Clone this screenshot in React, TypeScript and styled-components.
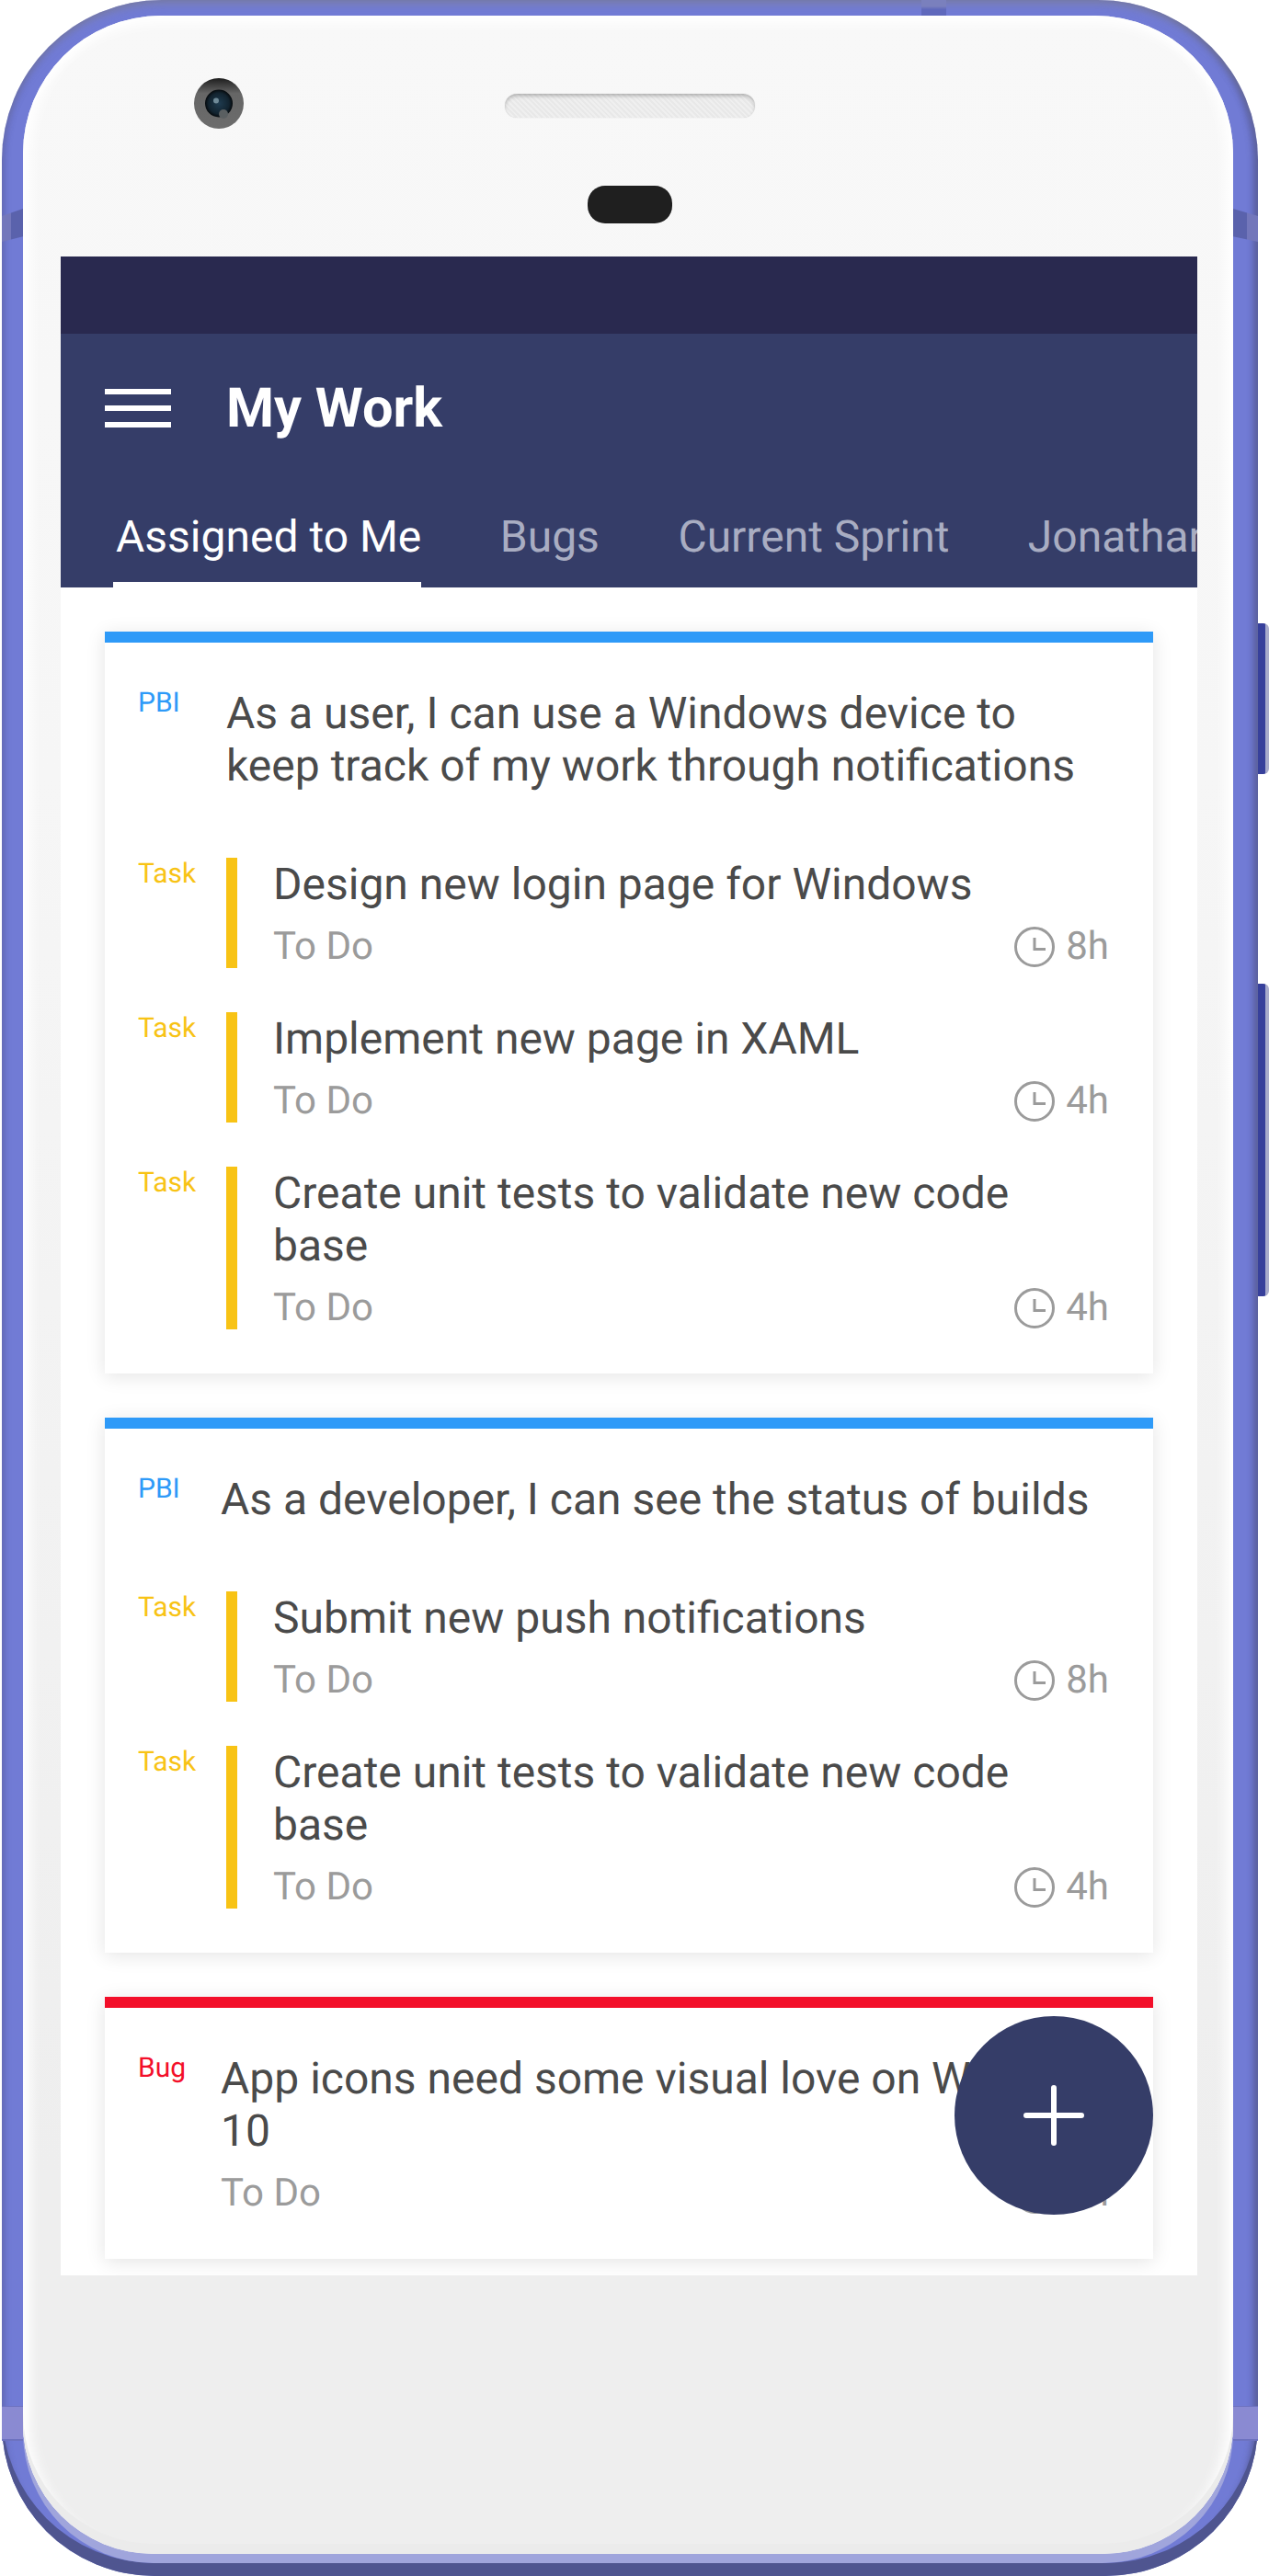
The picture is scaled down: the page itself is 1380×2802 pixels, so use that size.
import styled, { createGlobalStyle } from "styled-components";

const GlobalStyle = createGlobalStyle`
  html, body {
    margin: 0;
    background: #fff;
    overflow: hidden;
  }
  body {
    font-family: Roboto, "Liberation Sans", sans-serif;
    text-rendering: geometricPrecision;
  }
`;

type Task = { title: string; hours: string };
type WorkItem = {
  kind: "PBI" | "Bug";
  title: string;
  labelWidth: number;
  status?: string;
  hours?: string;
  tasks: Task[];
};

const colors = { PBI: "#2e9af8", Bug: "#f30f2a", Task: "#f8c315" };

const items: WorkItem[] = [
  {
    kind: "PBI",
    title:
      "As a user, I can use a Windows device to keep track of my work through notifications",
    labelWidth: 96,
    tasks: [
      { title: "Design new login page for Windows", hours: "8h" },
      { title: "Implement new page in XAML", hours: "4h" },
      { title: "Create unit tests to validate new code base", hours: "4h" },
    ],
  },
  {
    kind: "PBI",
    title: "As a developer, I can see the status of builds",
    labelWidth: 90,
    tasks: [
      { title: "Submit new push notifications", hours: "8h" },
      { title: "Create unit tests to validate new code base", hours: "4h" },
    ],
  },
  {
    kind: "Bug",
    title: "App icons need some visual love on Windows 10",
    labelWidth: 90,
    status: "To Do",
    hours: "4h",
    tasks: [],
  },
];

const tabs = ["Assigned to Me", "Bugs", "Current Sprint", "Jonathan"];

const ClockIcon = () => (
  <svg width="44" height="44" viewBox="0 0 44 44" fill="none">
    <circle cx="22" cy="22" r="20.5" stroke="#9b9b9b" strokeWidth="3" />
    <path d="M22 12v12.5h12" stroke="#9b9b9b" strokeWidth="3" />
  </svg>
);

const CameraLens = () => (
  <svg width="54" height="55" viewBox="0 0 54 55">
    <defs>
      <linearGradient id="ring" x1="0" y1="0" x2="0" y2="1">
        <stop offset="0" stopColor="#1d1d1d" />
        <stop offset="0.3" stopColor="#666" />
        <stop offset="1" stopColor="#6c6c6c" />
      </linearGradient>
      <radialGradient id="pupil">
        <stop offset="0" stopColor="#1f3c50" />
        <stop offset="0.75" stopColor="#12232f" />
        <stop offset="1" stopColor="#05090c" />
      </radialGradient>
    </defs>
    <ellipse cx="27" cy="27.5" rx="27" ry="27.5" fill="url(#ring)" />
    <circle cx="27" cy="27.5" r="15" fill="url(#pupil)" />
    <circle cx="24" cy="24.5" r="3" fill="#6f8a98" />
    <circle cx="32" cy="39" r="5" fill="#5a5f61" />
  </svg>
);

const PlusIcon = () => (
  <svg width="66" height="66" viewBox="0 0 66 66" fill="none">
    <path
      d="M33 3v60M3 33h60"
      stroke="#fff"
      strokeWidth="6"
      strokeLinecap="round"
    />
  </svg>
);

export default function App() {
  return (
    <>
      <GlobalStyle />
      <Phone>
        <UpperSeam $side="left" />
        <UpperSeam $side="right" />
        <LowerSeam $side="left" />
        <LowerSeam $side="right" />
        <TopSeam />
        <SideButton $top={678} $height={164} />
        <SideButton $top={1070} $height={340} />

        <Face>
          <Head>
            <Camera>
              <CameraLens />
            </Camera>
            <Speaker />
            <Sensor />
          </Head>

          <Screen>
            <StatusBar />
            <AppBar>
              <Toolbar>
                <Hamburger>
                  <span />
                  <span />
                  <span />
                </Hamburger>
                <PageTitle>My Work</PageTitle>
              </Toolbar>
              <TabStrip>
                {tabs.map((tab, i) => (
                  <Tab key={tab} $active={i === 0}>
                    {tab}
                  </Tab>
                ))}
              </TabStrip>
            </AppBar>

            <CardList>
              {items.map((item) => (
                <Card key={item.title} $color={colors[item.kind]}>
                  <ItemRow>
                    <Label $color={colors[item.kind]} $width={item.labelWidth}>
                      {item.kind}
                    </Label>
                    <ItemBody>
                      <ItemTitle>{item.title}</ItemTitle>
                      {item.status && (
                        <Meta>
                          <span>{item.status}</span>
                          <Time>
                            <ClockIcon />
                            {item.hours}
                          </Time>
                        </Meta>
                      )}
                    </ItemBody>
                  </ItemRow>

                  {item.tasks.length > 0 && (
                    <TaskList>
                      {item.tasks.map((task) => (
                        <ItemRow key={task.title}>
                          <Label $color={colors.Task} $width={96}>
                            Task
                          </Label>
                          <TaskBody>
                            <Title>{task.title}</Title>
                            <Meta>
                              <span>To Do</span>
                              <Time>
                                <ClockIcon />
                                {task.hours}
                              </Time>
                            </Meta>
                          </TaskBody>
                        </ItemRow>
                      ))}
                    </TaskList>
                  )}
                </Card>
              ))}
            </CardList>

            <Fab>
              <PlusIcon />
            </Fab>
          </Screen>
        </Face>
      </Phone>
    </>
  );
}

const Phone = styled.div`
  position: relative;
  box-sizing: border-box;
  width: 1366px;
  height: 2802px;
  margin-left: 2px;
  padding: 17px 27px 24px 23px;
  border-radius: 174px 174px 166px 166px;
  background: #717bd5;
  box-shadow:
    inset 0 -14px 0 #4f5590,
    inset 0 9px 8px -4px rgba(130, 130, 140, 0.55),
    inset -9px 0 7px -4px rgba(60, 60, 90, 0.45),
    inset 7px 0 7px -4px rgba(60, 60, 110, 0.3);
`;

const SideSeam = styled.div<{ $side: "left" | "right" }>`
  position: absolute;
  ${(p) => (p.$side === "left" ? "left: 0;" : "right: 0;")}
  width: ${(p) => (p.$side === "left" ? 23 : 27)}px;
`;

const UpperSeam = styled(SideSeam)`
  top: 227px;
  height: 36px;
  clip-path: ${(p) =>
    p.$side === "left"
      ? "polygon(0 22%, 100% 0, 100% 84%, 0 100%)"
      : "polygon(0 0, 100% 22%, 100% 100%, 0 84%)"};
  background: linear-gradient(
    ${(p) => (p.$side === "left" ? "90deg" : "270deg")},
    #7377bb 0 45%,
    #5a62ac 45%
  );
`;

const LowerSeam = styled(SideSeam)`
  top: 2617px;
  height: 38px;
  background: #8a8ad2;
  border-top: 1px solid #6d72c0;
  border-bottom: 2px solid #6d72c0;
  box-sizing: border-box;
`;

const TopSeam = styled.div`
  position: absolute;
  top: 0;
  left: 1000px;
  width: 27px;
  height: 17px;
  background: linear-gradient(#7a80bd 40%, #5f68bc 60%);
`;

const SideButton = styled.div<{ $top: number; $height: number }>`
  position: absolute;
  top: ${(p) => p.$top}px;
  right: -12px;
  width: 12px;
  height: ${(p) => p.$height}px;
  border-radius: 0 6px 6px 0;
  background: linear-gradient(90deg, #37409b 0 8px, #a8abcb 8px);
`;

const Face = styled.div`
  display: flex;
  flex-direction: column;
  height: 100%;
  padding: 0 39px 0 41px;
  box-sizing: border-box;
  border-radius: 150px 150px 142px 142px;
  background: linear-gradient(#f8f8f8, #f6f6f6 30%, #eeeeee 85%);
  box-shadow:
    0 10px 0 #a0a5dc,
    inset 0 -11px 0 #ebebeb,
    inset 0 16px 14px -8px #fff,
    inset 16px 0 14px -8px #fff,
    inset -16px 0 14px -8px #fff;
`;

const Head = styled.div`
  display: grid;
  grid-template-columns: 483px 1fr;
  align-content: start;
  height: 262px;
  flex: none;
`;

const Camera = styled.div`
  margin: 68px 0 0 145px;
  height: 55px;
  svg {
    display: block;
  }
`;

const Speaker = styled.div`
  box-sizing: border-box;
  width: 272px;
  height: 26px;
  margin-top: 85px;
  border-radius: 13px;
  background-color: #efefef;
  background-image: repeating-linear-gradient(
    45deg,
    rgba(0, 0, 0, 0.03) 0 2px,
    transparent 2px 4px
  );
  box-shadow:
    inset 0 3px 4px -1px rgba(0, 0, 0, 0.28),
    0 0 1px rgba(0, 0, 0, 0.2);
`;

const Sensor = styled.div`
  grid-column: 2;
  width: 92px;
  height: 41px;
  margin: 62px 0 0 90px;
  border-radius: 19px;
  background: #1f1f1f;
`;

const Screen = styled.div`
  position: relative;
  display: flex;
  flex-direction: column;
  height: 2196px;
  flex: none;
  background: #fff;
  overflow: hidden;
`;

const StatusBar = styled.div`
  height: 84px;
  flex: none;
  background: #29294f;
`;

const AppBar = styled.div`
  flex: none;
  background: #353d68;
  color: #fff;
`;

const Toolbar = styled.div`
  display: flex;
  align-items: center;
  gap: 60px;
  height: 162px;
  padding-left: 48px;
`;

const Hamburger = styled.div`
  display: flex;
  flex-direction: column;
  gap: 12px;
  width: 72px;
  span {
    display: block;
    height: 6px;
    background: #fff;
  }
`;

const PageTitle = styled.h1`
  margin: 0;
  font-size: 59.5px;
  line-height: 70px;
  font-weight: 700;
`;

const TabStrip = styled.div`
  display: flex;
  gap: 82.5px;
  height: 114px;
  box-sizing: border-box;
  padding: 30px 0 0 57px;
  white-space: nowrap;
  overflow: hidden;
`;

const Tab = styled.div<{ $active?: boolean }>`
  flex: none;
  height: 84px;
  box-sizing: border-box;
  padding-left: 3px;
  border-bottom: 6px solid ${(p) => (p.$active ? "#fff" : "transparent")};
  font-size: 48px;
  line-height: 57px;
  font-weight: 400;
  color: ${(p) => (p.$active ? "#fff" : "#a9adc2")};
`;

const CardList = styled.div`
  display: flex;
  flex-direction: column;
  gap: 48px;
  padding: 48px;
`;

const Card = styled.div<{ $color: string }>`
  display: flex;
  flex-direction: column;
  gap: 72px;
  padding: 48px 48px 48px 36px;
  border-top: 12px solid ${(p) => p.$color};
  background: #fff;
  box-shadow: 0 3px 20px rgba(0, 0, 0, 0.11);
`;

const ItemRow = styled.div`
  display: flex;
  align-items: flex-start;
`;

const Label = styled.div<{ $color: string; $width: number }>`
  flex: none;
  width: ${(p) => p.$width}px;
  font-size: 30px;
  line-height: 35px;
  color: ${(p) => p.$color};
`;

const ItemBody = styled.div`
  flex: 1;
  min-width: 0;
`;

const Title = styled.div`
  font-size: 48px;
  line-height: 57px;
  color: #4a4a4a;
`;

const ItemTitle = styled(Title)`
  margin-right: -8px;
`;

const Meta = styled.div`
  display: flex;
  align-items: center;
  justify-content: space-between;
  height: 50px;
  margin: 15px 0 -2px;
  font-size: 42px;
  line-height: 50px;
  color: #9b9b9b;
`;

const Time = styled.div`
  display: flex;
  align-items: center;
  gap: 12px;
`;

const TaskList = styled.div`
  display: flex;
  flex-direction: column;
  gap: 48px;
`;

const TaskBody = styled.div`
  flex: 1;
  min-width: 0;
  padding-left: 39px;
  border-left: 12px solid ${colors.Task};
`;

const Fab = styled.div`
  position: absolute;
  right: 48px;
  bottom: 66px;
  display: flex;
  align-items: center;
  justify-content: center;
  width: 216px;
  height: 216px;
  border-radius: 50%;
  background: #353d68;
`;
